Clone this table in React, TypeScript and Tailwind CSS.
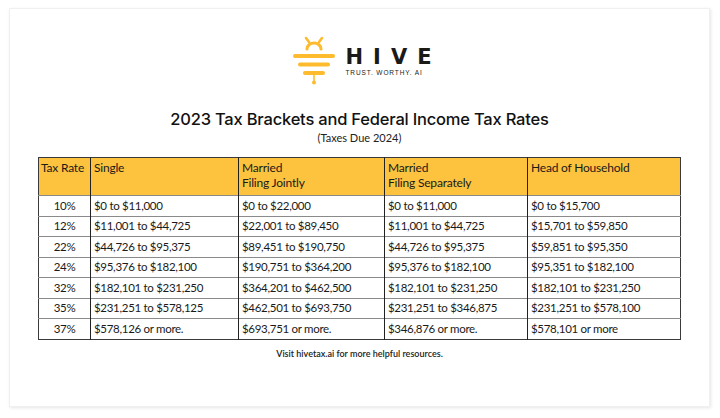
const rows: [string, string, string, string, string][] = [
  ["10%", "$0 to $11,000", "$0 to $22,000", "$0 to $11,000", "$0 to $15,700"],
  ["12%", "$11,001 to $44,725", "$22,001 to $89,450", "$11,001 to $44,725", "$15,701 to $59,850"],
  ["22%", "$44,726 to $95,375", "$89,451 to $190,750", "$44,726 to $95,375", "$59,851 to $95,350"],
  ["24%", "$95,376 to $182,100", "$190,751 to $364,200", "$95,376 to $182,100", "$95,351 to $182,100"],
  ["32%", "$182,101 to $231,250", "$364,201 to $462,500", "$182,101 to $231,250", "$182,101 to $231,250"],
  ["35%", "$231,251 to $578,125", "$462,501 to $693,750", "$231,251 to $346,875", "$231,251 to $578,100"],
  ["37%", "$578,126 or more.", "$693,751 or more.", "$346,876 or more.", "$578,101 or more"],
];

function BeeMark() {
  return (
    <svg width="44" height="52" viewBox="0 0 44 52" fill="none" stroke="#FDBB2D" strokeLinecap="round">
      {/* antennae + head */}
      <path d="M14 2 L17 6 M30 2 L27 6" strokeWidth="2.6" />
      <path d="M15 13 A7 6 0 0 1 29 13" strokeWidth="3" />
      {/* body stripes */}
      <path d="M3 20 H41" strokeWidth="4" />
      <path d="M8 28.5 H36" strokeWidth="4" />
      <path d="M13 37 H31" strokeWidth="4" />
      {/* stinger */}
      <path d="M22 37 V45" strokeWidth="1.6" />
      <circle cx="22" cy="46.5" r="2" fill="#FDBB2D" stroke="none" />
    </svg>
  );
}

export default function App() {
  return (
    <div className="h-[418px] w-[720px] bg-white pt-[8px] pl-[9px]">
      <div className="flex h-[399px] w-[701px] flex-col items-center border border-[#f0f0f0] bg-white shadow-[1px_1px_3px_rgba(0,0,0,0.1)]">
        {/* logo */}
        <div className="mt-[27px] ml-[14px] flex items-start">
          <BeeMark />
          <div className="ml-[10px] mt-[13px] flex flex-col">
            <span className="font-['DejaVu_Sans',sans-serif] text-[21px] font-bold leading-[17px] tracking-[10px] text-[#1c1a17]">
              HIVE
            </span>
            <span className="mt-[3px] font-['Liberation_Sans',sans-serif] text-[6.5px] leading-[8px] tracking-[0.9px] text-[#1c1a17]">
              TRUST. WORTHY. AI
            </span>
          </div>
        </div>

        {/* title */}
        <h1 className="mt-[20px] font-['Inter',sans-serif] text-[16.5px] font-medium leading-[22px] tracking-[-0.2px] text-[#111]">
          2023 Tax Brackets and Federal Income Tax Rates
        </h1>
        <p className="mt-[1px] font-['Lato',sans-serif] text-[11px] leading-[14px] text-[#222]">(Taxes Due 2024)</p>

        {/* table */}
        <table className="mt-[12px] w-[643px] table-fixed border-collapse border border-[#3a3a3a] font-['Lato',sans-serif] text-[11.5px] tracking-[-0.3px] text-[#1a1a1a]">
          <colgroup>
            <col className="w-[52px]" />
            <col className="w-[148px]" />
            <col className="w-[146px]" />
            <col className="w-[143px]" />
            <col />
          </colgroup>
          <thead>
            <tr className="h-[38px] bg-[#FDC23E] align-top text-[12px] leading-[15px] tracking-[-0.2px]">
              <th className="border-r border-[#222] px-[2px] pt-[2px] text-left font-normal">Tax Rate</th>
              <th className="border-r border-[#222] px-[3px] pt-[2px] text-left font-normal">Single</th>
              <th className="border-r border-[#222] px-[3px] pt-[2px] text-left font-normal">
                Married
                <br />
                Filing Jointly
              </th>
              <th className="border-r border-[#222] px-[3px] pt-[2px] text-left font-normal">
                Married
                <br />
                Filing Separately
              </th>
              <th className="px-[3px] pt-[2px] text-left font-normal">Head of Household</th>
            </tr>
          </thead>
          <tbody>
            {rows.map((r) => (
              <tr key={r[0]} className="h-[20.5px] border-t border-[#8a8a8a] leading-[14px]">
                <td className="border-r border-[#222] text-center">{r[0]}</td>
                <td className="border-r border-[#222] px-[3px]">{r[1]}</td>
                <td className="border-r border-[#222] px-[3px]">{r[2]}</td>
                <td className="border-r border-[#222] px-[3px]">{r[3]}</td>
                <td className="px-[3px]">{r[4]}</td>
              </tr>
            ))}
          </tbody>
        </table>

        <p className="mt-[8px] font-['Lato',sans-serif] text-[9px] font-semibold leading-[12px] text-[#222]">
          Visit hivetax.ai for more helpful resources.
        </p>
      </div>
    </div>
  );
}
